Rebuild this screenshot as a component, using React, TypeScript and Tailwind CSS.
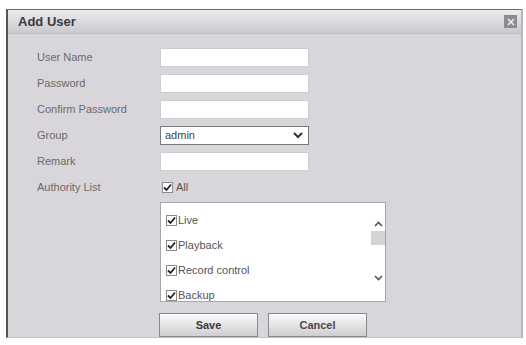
import React from "react";

const LABEL = "w-[123px] pl-[29px] box-content text-[11px] text-[#6a6a6a]";
const INPUT = "w-[149px] h-[19px] bg-white border border-[#d0ccd2]";

function Check() {
  return (
    <span className="inline-flex items-center justify-center w-[11px] h-[11px] border border-[#8a8a8a] bg-white">
      <svg width="9" height="9" viewBox="0 0 9 9">
        <path d="M1 4.5 L3.5 7 L8 1.5" fill="none" stroke="#222" strokeWidth="1.8" />
      </svg>
    </span>
  );
}

function Row({ label, children }: { label: string; children: React.ReactNode }) {
  return (
    <div className="flex items-center h-[26px]">
      <span className={LABEL}>{label}</span>
      {children}
    </div>
  );
}

const ITEMS = ["Live", "Playback", "Record control", "Backup"];

export default function App() {
  return (
    <div className="w-[526px] h-[345px] bg-white overflow-hidden pt-[9px] pl-[6px]" style={{ fontFamily: '"Liberation Sans", Arial, sans-serif' }}>
      <div className="w-[517px] h-[329px] bg-[#d9d6db] border-l-2 border-l-[#555] border-t border-t-[#6a6a6a] border-r-2 border-r-[#b8b5ba] border-b border-b-[#c4c1c6] flex flex-col">
        {/* header */}
        <div className="h-[24px] flex items-center justify-between pl-[10px] pr-[4px] bg-gradient-to-b from-[#ecebee] to-[#cbc9ce] border-b border-[#c2bfc5]">
          <span className="text-[13px] font-bold text-[#3a3a3a]">Add User</span>
          <span className="w-[13px] h-[13px] bg-[#8d8b90] flex items-center justify-center">
            <svg width="8" height="8" viewBox="0 0 8 8">
              <path d="M1 1 L7 7 M7 1 L1 7" stroke="#eee" strokeWidth="1.6" />
            </svg>
          </span>
        </div>

        {/* body */}
        <div className="flex flex-col pt-[10px]">
          <Row label="User Name">
            <div className={INPUT} />
          </Row>
          <Row label="Password">
            <div className={INPUT} />
          </Row>
          <Row label="Confirm Password">
            <div className={INPUT} />
          </Row>
          <Row label="Group">
            <div className="w-[149px] h-[19px] bg-white border border-[#7a7a7a] flex items-center justify-between pl-[4px] pr-[5px]">
              <span className="text-[11px] text-[#444]">admin</span>
              <svg width="10" height="7" viewBox="0 0 10 7">
                <path d="M1 1 L5 5 L9 1" fill="none" stroke="#333" strokeWidth="2" />
              </svg>
            </div>
          </Row>
          <Row label="Remark">
            <div className={INPUT} />
          </Row>
          <Row label="Authority List">
            <div className="flex items-center gap-[3px] pl-[2px]">
              <Check />
              <span className="text-[11px] text-[#555]">All</span>
            </div>
          </Row>

          {/* list */}
          <div className="ml-[152px] mt-[2px] w-[226px] h-[100px] bg-white border border-[#a9a6ab] flex overflow-hidden">
            <div className="flex-1 flex flex-col pt-[5px] pl-[5px]">
              {ITEMS.map((it) => (
                <div key={it} className="h-[25px] flex items-center shrink-0">
                  <Check />
                  <span className="text-[11px] text-[#555] ml-[1px]">{it}</span>
                </div>
              ))}
            </div>
            <div className="w-[14px] flex flex-col items-center pt-[18px]">
              <svg width="9" height="6" viewBox="0 0 9 6">
                <path d="M1 5 L4.5 1.5 L8 5" fill="none" stroke="#555" strokeWidth="1.6" />
              </svg>
              <div className="w-[14px] h-[14px] bg-[#d4d2d6] mt-[4px]" />
              <svg className="mt-[30px]" width="9" height="6" viewBox="0 0 9 6">
                <path d="M1 1 L4.5 4.5 L8 1" fill="none" stroke="#555" strokeWidth="1.6" />
              </svg>
            </div>
          </div>

          {/* buttons */}
          <div className="ml-[151px] mt-[11px] flex gap-[10px]">
            <button className="w-[99px] h-[24px] border border-[#8a878c] bg-gradient-to-b from-[#fbfbfb] to-[#cfcdd1] text-[11px] font-bold text-[#3a3a3a]">
              Save
            </button>
            <button className="w-[99px] h-[24px] border border-[#8a878c] bg-gradient-to-b from-[#fbfbfb] to-[#cfcdd1] text-[11px] font-bold text-[#4a4a4a]">
              Cancel
            </button>
          </div>
        </div>
      </div>
    </div>
  );
}
